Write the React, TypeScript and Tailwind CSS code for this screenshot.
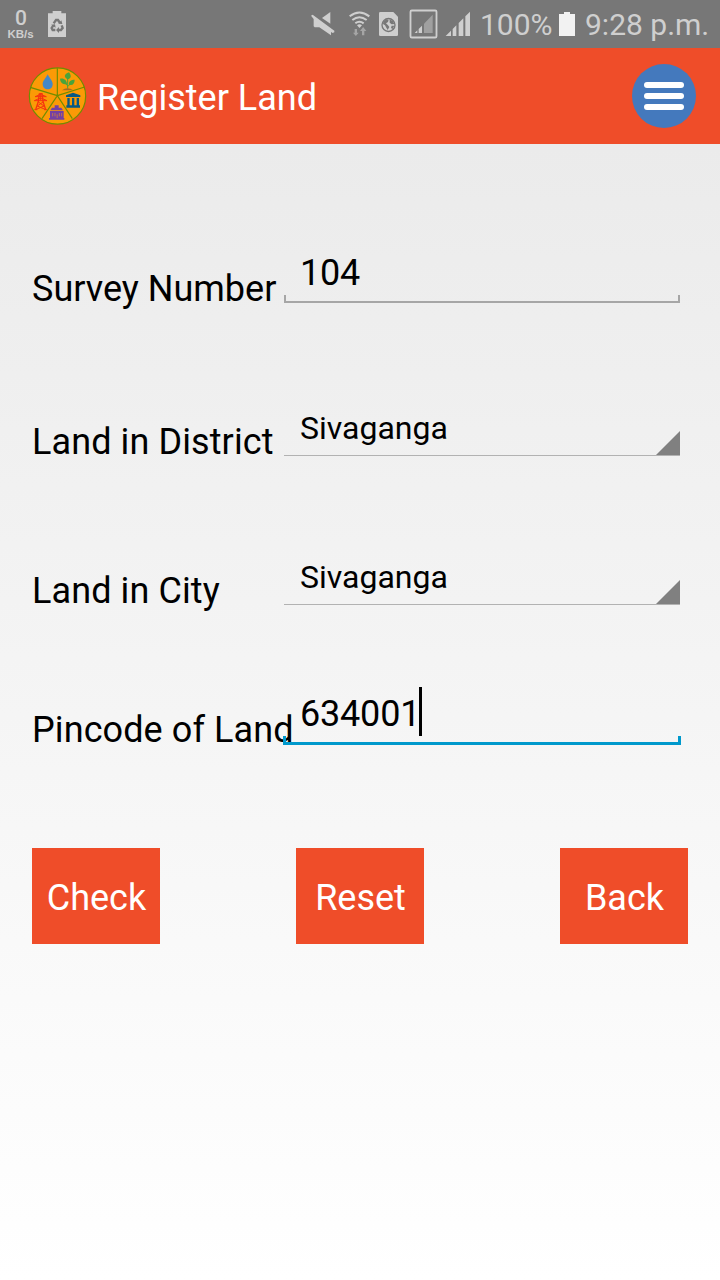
import type { ReactNode } from "react";

function MuteIcon() {
  return (
    <svg className="h-12 w-[46px] shrink-0" viewBox="0 0 138 144" fill="#cfcfcf">
      <path d="M91 36V71L66 54Z" />
      <path d="M33 47L38 44L103 92V97L98 99L93 96V106L58 82H44L41 79V57Z" />
    </svg>
  );
}

function WifiIcon() {
  return (
    <svg className="h-12 w-[29px] shrink-0" viewBox="138 0 87 144" fill="none" stroke="#cfcfcf" strokeWidth="6">
      <path d="M149 49Q178 26 208 49" />
      <path d="M157 60Q178 43 200 60" />
      <path d="M166 70Q178 60 191 70" />
      <path d="M171 76Q178 70 186 76L178.500 84Z" fill="#cfcfcf" stroke="none" />
      <path d="M164 87H171V98H176L167.500 108L159 98H164Z" fill="#a5a5a5" stroke="none" />
      <path d="M186 106H193V93H199L189.500 81L180 93H186Z" fill="#a5a5a5" stroke="none" />
    </svg>
  );
}

function SimIcon() {
  return (
    <svg className="h-12 w-[28px] shrink-0" viewBox="228 0 84 144">
      <path d="M241 36H280L294 50V104Q294 108 290 108H241Q237 108 237 104V40Q237 36 241 36Z" fill="#cfcfcf" />
      <circle cx="265.500" cy="75" r="19.500" fill="none" stroke="#777" strokeWidth="4" />
      <path d="M250 65L259 58L266 59L264 66L258 70L264 76L268 81L263 90L259 83L255 76L249 72ZM269 58L279 64L283 72L275 73L269 68ZM275 77L283 77L277 88L273 83Z" fill="#777" />
    </svg>
  );
}

function SignalIcons() {
  return (
    <svg className="h-12 w-[72px] shrink-0" viewBox="312 0 216 144">
      <rect x="331.500" y="31.500" width="78" height="81" rx="4" fill="none" stroke="#cfcfcf" strokeWidth="5.500" />
      <path d="M372 71L398 44V99H372Z" fill="#a0a0a0" />
      <path d="M344 99L352 91V99ZM356 87L366 77V99H356Z" fill="#cfcfcf" />
      <path d="M437 108L453 92V108ZM458 87L469 76V108H458ZM476 69L490 55V108H476ZM496 49L510 35V108H496Z" fill="#cfcfcf" />
    </svg>
  );
}

function StatusBar() {
  return (
    <header className="flex h-12 items-start bg-[#777777] text-[#cfcfcf]">
      <div className="flex w-[42px] flex-col items-center pt-[9px]">
        <span className="text-[21px] leading-[18px] font-medium">0</span>
        <span className="-ml-px pt-px font-['Liberation_Sans'] text-[11.5px] leading-[13px] font-bold">KB/s</span>
      </div>
      <svg className="h-12 w-[30px]" viewBox="126 0 90 144">
        <path d="M144 40H158V33H184V40H198V111H144Z" fill="#cfcfcf" />
        <g fill="none" stroke="#777" strokeWidth="7">
          <path d="M161 70L168 60H174L180 69" />
          <path d="M185 76L188 84L183 90H174" />
          <path d="M166 90H158L155 84L160 76" />
        </g>
        <path d="M175 71L187 72L184 61ZM177 81V99L168 90ZM153 74L165 73L167 83Z" fill="#777" />
      </svg>
      <div className="ml-[228px] flex">
        <MuteIcon />
        <WifiIcon />
        <div className="w-px" />
        <SimIcon />
        <SignalIcons />
      </div>
      <span className="ml-1 w-[76px] pt-[7px] text-[30px] leading-9">100%</span>
      <svg className="h-12 w-[23px] shrink-0" viewBox="0 0 23 48">
        <path d="M3 14H8V12H14V14H19V36H3Z" fill="#f2f2f2" />
      </svg>
      <span className="ml-1.5 pt-[7px] text-[30px] leading-9 whitespace-nowrap">9:28 p.m.</span>
    </header>
  );
}

function Logo() {
  return (
    <svg className="h-[72px] w-[75px]" viewBox="0 0 225 216">
      <circle cx="112.500" cy="108" r="84.500" fill="#fb9a06" stroke="#6f8d00" strokeWidth="3.500" />
      <path d="M112 107V25M112 107L31 82M112 107L194 81M112 107L66 176M112 107L157 176" fill="none" stroke="#6f8d00" strokeWidth="3.500" />
      {/* water */}
      <path d="M83 43C77 55 68 63 68 72C68 82 75 88 83 88C92 88 98 82 98 72C98 63 89 55 83 43Z" fill="#4488c7" />
      {/* farming */}
      <g fill="#4aa33b">
        <path d="M143 58C130 52 132 42 147 37C155 47 154 56 143 58Z" />
        <path d="M120 56C131 53 141 60 141 73C129 74 121 68 120 56Z" />
        <path d="M147 74C145 64 153 59 164 59C164 71 158 77 147 74Z" />
      </g>
      <path d="M143 54V86M131 66L143 77M156 67L144 79" fill="none" stroke="#4aa33b" strokeWidth="3" />
      <path d="M126 91Q142 79 160 91Z" fill="#a66b23" />
      {/* power */}
      <g fill="none" stroke="#f6320f" strokeWidth="3">
        <path d="M58 101H66L69 124L77 149M58 101L55 124L47 149" strokeWidth="4" />
        <path d="M45 110L57 105H67L79 110ZM43 122L56 116H68L81 122Z" />
        <path d="M55 126L72 138L49 148M69 126L52 138L75 148M43 149H52M72 149H81M62 102V120" />
      </g>
      {/* bank */}
      <path d="M138 106L159 98L181 106V111H138ZM142 114H149V136H142ZM156 114H163V136H156ZM170 114H177V136H170ZM139 136H180V143H139Z" fill="#075985" />
      {/* government office */}
      <path d="M104 136H116V143H124L129 151H91L96 143H104ZM90 153H131V174H133V179H87V174H90Z" fill="#7340a4" />
      <path d="M98 159V169M105 159V169M118 159V169M125 159V169M111.500 163V174" fill="none" stroke="#e58a28" strokeWidth="2" />
    </svg>
  );
}

function AppBar() {
  return (
    <div className="flex h-24 items-center bg-[#ef4d29] pr-6 pl-5">
      <Logo />
      <h1 className="mt-[3px] ml-0.5 text-[36px] leading-[42px] text-white">Register Land</h1>
      <button className="ml-auto flex size-16 flex-col items-center justify-center gap-[5px] rounded-full bg-[#4479bd]">
        <span className="h-1.5 w-10 rounded-full bg-white" />
        <span className="h-1.5 w-10 rounded-full bg-white" />
        <span className="h-1.5 w-10 rounded-full bg-white" />
      </button>
    </div>
  );
}

function Label({ children }: { children: ReactNode }) {
  return <span className="w-[252px] shrink-0 self-end text-[36px] leading-[42px] whitespace-nowrap">{children}</span>;
}

function Spinner({ label, value }: { label: string; value: string }) {
  return (
    <div className="flex h-[54px] pl-8 tracking-[0.1px]">
      <Label>{label}</Label>
      <div className="-mt-px flex h-12 w-[396px] items-start justify-between border-b border-[#b2b2b2] pl-4">
        <span className="mt-px text-[32px] leading-[38px] tracking-normal">{value}</span>
        <svg className="size-6 self-end" viewBox="0 0 24 24">
          <path d="M24 0V24H0Z" fill="#808080" />
        </svg>
      </div>
    </div>
  );
}

const ACTIONS = ["Check", "Reset", "Back"];

export default function App() {
  return (
    <div className="flex h-[1280px] w-[720px] flex-col overflow-hidden bg-white font-[Roboto,sans-serif] text-black">
      <StatusBar />
      <AppBar />
      <main className="flex-1 bg-linear-to-b from-[#ebebeb] to-white pt-[108px]">
        <div className="flex h-[58px] pl-8">
          <Label>Survey Number</Label>
          <div className="h-[51px] w-[396px]">
            <div className="h-[43px] pl-4 text-[36px] leading-[42px] tracking-[-0.2px]">104</div>
            <div className="h-2 border-x-2 border-b-2 border-[#a6a6a6]" />
          </div>
        </div>

        <div className="mt-[99px] flex flex-col gap-[95px]">
          <Spinner label="Land in District" value="Sivaganga" />
          <Spinner label="Land in City" value="Sivaganga" />
        </div>

        <div className="mt-[75px] flex h-[64px] pl-8 tracking-[0.1px]">
          <Label>Pincode of Land</Label>
          <div className="relative -ml-px h-[58px] w-[398px]">
            <div className="flex h-[49px] pl-[17px]">
              <span className="mt-1.5 text-[36px] leading-[42px] tracking-[-0.2px]">634001</span>
              <span className="-ml-px h-[49px] w-[3px] bg-black" />
            </div>
            <div className="h-[9px] border-x-3 border-b-3 border-[#0099cc]" />
          </div>
        </div>

        <div className="mt-[97px] flex justify-between px-8">
          {ACTIONS.map(action => (
            <button key={action} className="h-24 w-32 bg-[#ef4d29] pt-1 pl-px text-[36px] leading-[42px] text-white">
              {action}
            </button>
          ))}
        </div>
      </main>
    </div>
  );
}
